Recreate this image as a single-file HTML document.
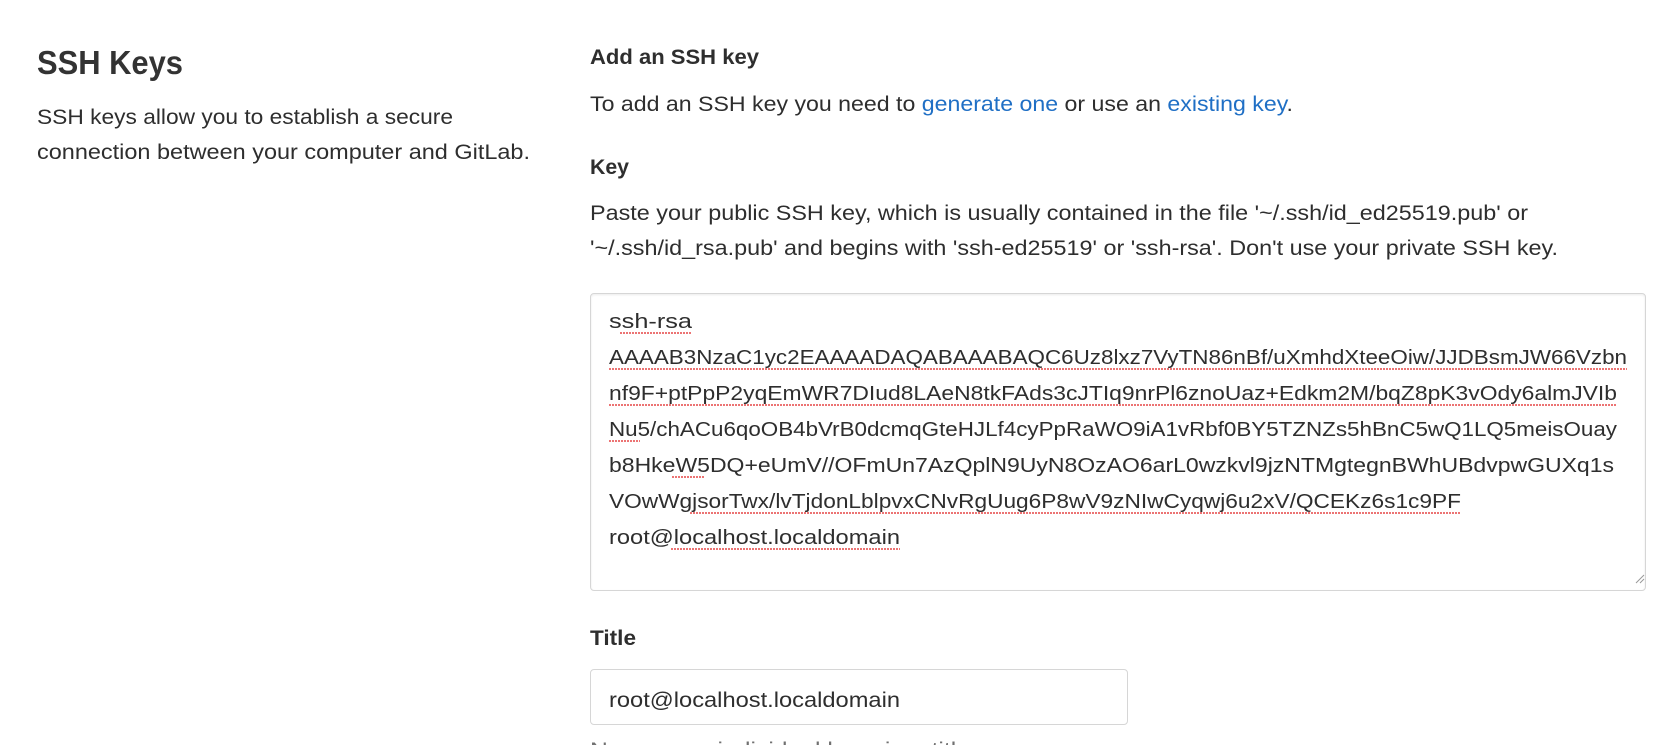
<!DOCTYPE html>
<html><head><meta charset="utf-8"><style>
body{margin:0;width:1662px;height:745px;overflow:hidden;background:#fff;font-family:"Liberation Sans",sans-serif;color:#2e2e2e;position:relative}
.a{position:absolute;white-space:nowrap}
</style></head><body>
<div class="a" style="left:590px;top:293px;width:1054px;height:296px;border:1px solid #d6d6d6;border-radius:4px;box-shadow:inset 0 1px 2px rgba(0,0,0,.08)"></div>
<div class="a" style="left:590px;top:669px;width:536px;height:54px;border:1px solid #d6d6d6;border-radius:4px"></div>
<svg class="a" style="left:0;top:0" width="1662" height="745" font-family="Liberation Sans,sans-serif" font-size="21" fill="#2e2e2e">
<text x="37" y="74" font-size="33" font-weight="bold" fill="#333" textLength="146" lengthAdjust="spacingAndGlyphs">SSH Keys</text>
<text x="37" y="124" textLength="416" lengthAdjust="spacingAndGlyphs">SSH keys allow you to establish a secure</text>
<text x="37" y="159" textLength="493" lengthAdjust="spacingAndGlyphs">connection between your computer and GitLab.</text>
<text x="590" y="64" font-weight="bold" textLength="169" lengthAdjust="spacingAndGlyphs">Add an SSH key</text>
<text x="590" y="111" textLength="703" lengthAdjust="spacingAndGlyphs">To add an SSH key you need to <tspan fill="#1f6fc5">generate one</tspan> or use an <tspan fill="#1f6fc5">existing key</tspan>.</text>
<text x="590" y="174" font-weight="bold" textLength="39" lengthAdjust="spacingAndGlyphs">Key</text>
<text x="590" y="220" textLength="938" lengthAdjust="spacingAndGlyphs">Paste your public SSH key, which is usually contained in the file '~/.ssh/id_ed25519.pub' or</text>
<text x="590" y="255" textLength="968" lengthAdjust="spacingAndGlyphs">'~/.ssh/id_rsa.pub' and begins with 'ssh-ed25519' or 'ssh-rsa'. Don't use your private SSH key.</text>
<g font-size="20">
<text x="609" y="328" textLength="83" lengthAdjust="spacingAndGlyphs">ssh-rsa</text>
<text x="609" y="364" textLength="1018" lengthAdjust="spacingAndGlyphs">AAAAB3NzaC1yc2EAAAADAQABAAABAQC6Uz8lxz7VyTN86nBf/uXmhdXteeOiw/JJDBsmJW66Vzbn</text>
<text x="609" y="400" textLength="1008" lengthAdjust="spacingAndGlyphs">nf9F+ptPpP2yqEmWR7DIud8LAeN8tkFAds3cJTIq9nrPl6znoUaz+Edkm2M/bqZ8pK3vOdy6almJVIb</text>
<text x="609" y="436" textLength="1008" lengthAdjust="spacingAndGlyphs">Nu5/chACu6qoOB4bVrB0dcmqGteHJLf4cyPpRaWO9iA1vRbf0BY5TZNZs5hBnC5wQ1LQ5meisOuay</text>
<text x="609" y="472" textLength="1005" lengthAdjust="spacingAndGlyphs">b8HkeW5DQ+eUmV//OFmUn7AzQplN9UyN8OzAO6arL0wzkvl9jzNTMgtegnBWhUBdvpwGUXq1s</text>
<text x="609" y="508" textLength="852" lengthAdjust="spacingAndGlyphs">VOwWgjsorTwx/lvTjdonLblpvxCNvRgUug6P8wV9zNIwCyqwj6u2xV/QCEKz6s1c9PF</text>
<text x="609" y="544" textLength="291" lengthAdjust="spacingAndGlyphs">root@localhost.localdomain</text>
</g>
<g stroke="#e02020" stroke-width="1.2" fill="none" stroke-dasharray="2 1">
<line x1="620" y1="333" x2="692" y2="333"/><line x1="609" y1="369" x2="1627" y2="369"/>
<line x1="609" y1="405" x2="1617" y2="405"/><line x1="609" y1="441" x2="640" y2="441"/>
<line x1="672" y1="477" x2="705" y2="477"/><line x1="690" y1="513" x2="1461" y2="513"/>
<line x1="671" y1="549" x2="900" y2="549"/></g>
<path d="M1640 583l4-4M1636 583l8-8" stroke="#999" stroke-width="1"/>
<text x="590" y="645" font-weight="bold" textLength="46" lengthAdjust="spacingAndGlyphs">Title</text>
<text x="609" y="707" textLength="291" lengthAdjust="spacingAndGlyphs">root@localhost.localdomain</text>
<text x="590" y="757" fill="#707070" textLength="380" lengthAdjust="spacingAndGlyphs">Name your individual key via a title</text>
</svg>
</body></html>
